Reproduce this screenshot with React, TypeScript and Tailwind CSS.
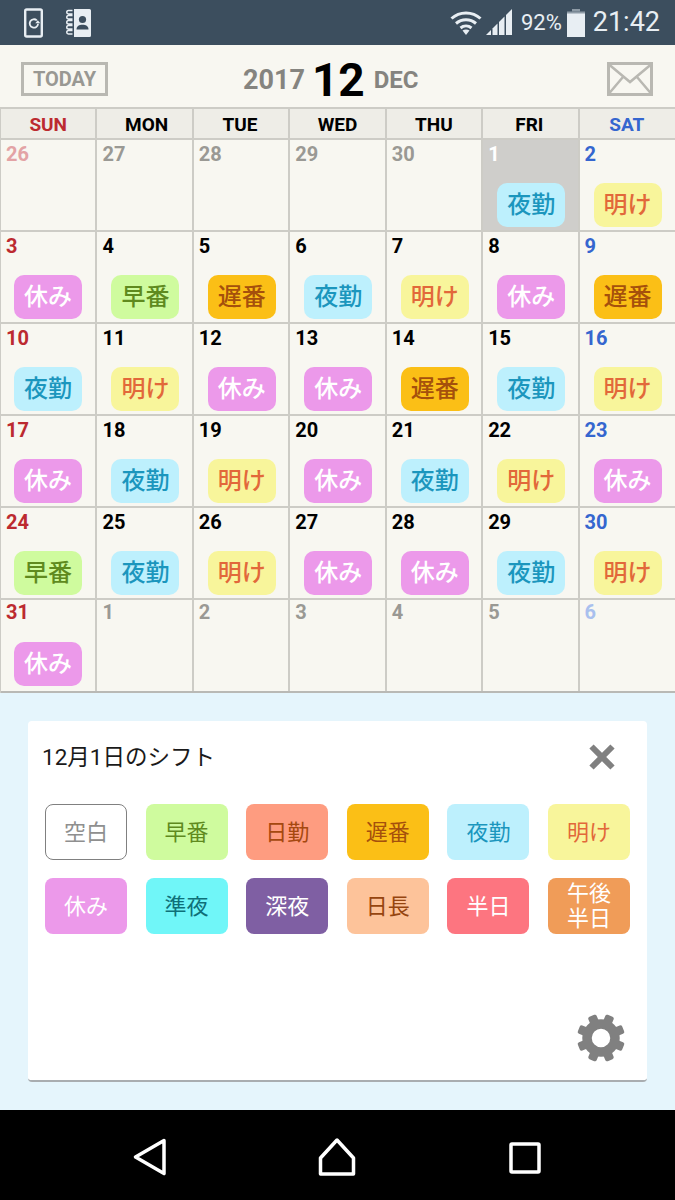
const font = { fontFamily: '"Roboto", "Noto Sans CJK JP", sans-serif' };

type Shift = { label: string; bg: string; fg: string };

const shifts: Record<string, Shift> = {
  yakin: { label: "夜勤", bg: "bg-[#bdf0fd]", fg: "text-[#1b96bd]" },
  ake: { label: "明け", bg: "bg-[#f8f59b]", fg: "text-[#e2683a]" },
  yasumi: { label: "休み", bg: "bg-[#ec99ea]", fg: "text-white" },
  haya: { label: "早番", bg: "bg-[#cffb9e]", fg: "text-[#5f8a1e]" },
  oso: { label: "遅番", bg: "bg-[#fbbf16]", fg: "text-[#a5500c]" },
};

const weekdays = [
  { name: "SUN", color: "text-[#bc2a30]" },
  { name: "MON", color: "text-black pl-[4px]" },
  { name: "TUE", color: "text-black pr-[2px]" },
  { name: "WED", color: "text-black" },
  { name: "THU", color: "text-black" },
  { name: "FRI", color: "text-black pr-[2px]" },
  { name: "SAT", color: "text-[#3566cf] pr-[2px]" },
];

// day, shift key, muted (outside the month)
const days: [number, string | null, boolean][] = [
  [26, null, true], [27, null, true], [28, null, true], [29, null, true], [30, null, true], [1, "yakin", false], [2, "ake", false],
  [3, "yasumi", false], [4, "haya", false], [5, "oso", false], [6, "yakin", false], [7, "ake", false], [8, "yasumi", false], [9, "oso", false],
  [10, "yakin", false], [11, "ake", false], [12, "yasumi", false], [13, "yasumi", false], [14, "oso", false], [15, "yakin", false], [16, "ake", false],
  [17, "yasumi", false], [18, "yakin", false], [19, "ake", false], [20, "yasumi", false], [21, "yakin", false], [22, "ake", false], [23, "yasumi", false],
  [24, "haya", false], [25, "yakin", false], [26, "ake", false], [27, "yasumi", false], [28, "yasumi", false], [29, "yakin", false], [30, "ake", false],
  [31, "yasumi", false], [1, null, true], [2, null, true], [3, null, true], [4, null, true], [5, null, true], [6, null, true],
];

const buttons = [
  { label: "空白", cls: "bg-white text-[#8f8f8f] border border-[#808080]" },
  { label: "早番", cls: "bg-[#cffb9e] text-[#5f8a1e]" },
  { label: "日勤", cls: "bg-[#fe9c80] text-[#a5480f]" },
  { label: "遅番", cls: "bg-[#fbbf16] text-[#a5500c]" },
  { label: "夜勤", cls: "bg-[#bdf0fd] text-[#1b96bd]" },
  { label: "明け", cls: "bg-[#f8f59b] text-[#e2683a]" },
  { label: "休み", cls: "bg-[#ec99ea] text-white" },
  { label: "準夜", cls: "bg-[#70f6f8] text-[#0f6f78]" },
  { label: "深夜", cls: "bg-[#7f5fa3] text-white" },
  { label: "日長", cls: "bg-[#fdc39a] text-[#96450f]" },
  { label: "半日", cls: "bg-[#fd7580] text-white" },
  { label: "午後\n半日", cls: "bg-[#f09c58] text-white" },
];

function dayColor(col: number, muted: boolean, selected: boolean) {
  if (selected) return "text-white";
  if (col === 0) return muted ? "text-[#e3a3a5]" : "text-[#bc2a30]";
  if (col === 6) return muted ? "text-[#a9c0ee]" : "text-[#3566cf]";
  return muted ? "text-[#9a9994]" : "text-black";
}

function StatusBar() {
  return (
    <div className="h-[45px] bg-[#3c4e5e] flex items-center pl-[24px] pr-[15px] shrink-0">
      <svg width="20" height="30" viewBox="0 0 20 30" fill="none">
        <rect x="1.200" y="1.500" width="16.600" height="27" rx="1.500" fill="#3c4e5e" stroke="#e8eef3" strokeWidth="2.400" />
        <path d="M12.800 12.400a4.200 4.200 0 1 0 1.300 3.400" stroke="#e8eef3" strokeWidth="1.800" />
        <path d="M11.300 15.300h5l-2.500-3z" fill="#e8eef3" />
      </svg>
      <svg className="ml-[22px]" width="26" height="30" viewBox="0 0 26 30" fill="none">
        <path d="M8 1h15.500a1.500 1.500 0 0 1 1.500 1.500v25a1.500 1.500 0 0 1-1.500 1.500H8z" fill="#e8eef3" />
        <circle cx="16.500" cy="11.500" r="3.600" fill="#3c4e5e" />
        <path d="M10.500 21.500c0-3.400 2.800-4.800 6-4.800s6 1.400 6 4.800z" fill="#3c4e5e" />
        <path
          d="M6.500 2.500H2.500a1.500 1.500 0 0 0 0 3.500h4M6.500 7.500H2.500a1.500 1.500 0 0 0 0 3.500h4M6.500 12.500H2.500a1.500 1.500 0 0 0 0 3.500h4M6.500 17.500H2.500a1.500 1.500 0 0 0 0 3.500h4M6.500 22.500H2.500a1.500 1.500 0 0 0 0 3.500h4"
          stroke="#e8eef3"
          strokeWidth="1.500"
        />
      </svg>
      <div className="ml-auto flex items-center">
        <svg width="32" height="26" viewBox="0 0 32 26" fill="none">
          <path d="M1.500 8.500C9.500 1 22.500 1 30.500 8.500" stroke="#e8eef3" strokeWidth="3" />
          <path d="M6 13.500c5.800-5 14.200-5 20 0" stroke="#e8eef3" strokeWidth="3" />
          <path d="M10.500 18c3.200-2.600 7.800-2.600 11 0" stroke="#e8eef3" strokeWidth="3" />
          <path d="M12.500 20.500 16 25l3.500-4.500c-2-1.300-5-1.300-7 0z" fill="#e8eef3" />
        </svg>
        <svg className="ml-[4px]" width="27" height="27" viewBox="0 0 27 27">
          <path d="M0 26 5 21v5z" fill="#e8eef3" />
          <path d="M6.500 19.500 11.500 14.500V26h-5z" fill="#e8eef3" />
          <path d="M13 13 18.500 7.500V26H13z" fill="#e8eef3" />
          <path d="M20 6 26 0v26h-6z" fill="#e8eef3" />
        </svg>
        <span className="ml-[8px] text-[22px] leading-none text-[#e8eef3]">92%</span>
        <svg className="ml-[5px]" width="18" height="28" viewBox="0 0 18 28">
          <path d="M5 0h8v2.500H5z" fill="#8e9ba6" />
          <path d="M0 2.500h18V5H0z" fill="#8e9ba6" />
          <rect x="0" y="4.500" width="18" height="23.500" fill="#e8eef3" />
        </svg>
        <span className="ml-[8px] text-[27px] leading-none text-[#e8eef3]">21:42</span>
      </div>
    </div>
  );
}

function Header() {
  return (
    <div className="h-[62px] bg-[#f8f7f1] flex items-center pl-[21px] pr-[22px] shrink-0">
      <div className="w-[87px] h-[34px] mt-[6px] border-[3px] border-[#b9b8b2] flex items-center justify-center text-[20px] font-bold text-[#999893] leading-none">
        TODAY
      </div>
      <div className="ml-[135px] flex items-center mt-[8px]">
        <span className="text-[27px] font-bold text-[#85847f] leading-none">2017</span>
        <span className="ml-[7px] text-[46px] font-bold text-black leading-none">12</span>
        <span className="ml-[9px] text-[24px] font-bold text-[#85847f] leading-none">DEC</span>
      </div>
      <svg className="ml-auto mt-[5px]" width="46" height="34" viewBox="0 0 46 34" fill="none">
        <rect x="1.500" y="1.500" width="43" height="31" stroke="#b9b8b2" strokeWidth="3" fill="none" />
        <path d="M2 2.500 23 20 44 2.500M2 31.500 16 15M44 31.500 30 15" stroke="#b9b8b2" strokeWidth="2.500" />
      </svg>
    </div>
  );
}

function Calendar() {
  return (
    <div className="w-[676px] shrink-0 bg-[#f8f7f1] border-l border-[#cdccc6]">
      <div className="grid grid-cols-7 h-[33px] border-t-2 border-b-2 border-[#cdccc6] bg-[#eeede7]">
        {weekdays.map((w, i) => (
          <div
            key={w.name}
            className={`flex items-center justify-center pt-[1px] text-[19px] font-bold leading-none ${w.color} ${i < 6 ? "border-r-2 border-[#cdccc6]" : ""}`}
          >
            {w.name}
          </div>
        ))}
      </div>
      <div className="grid grid-cols-7 grid-rows-[repeat(5,92px)_91px] border-b-2 border-[#b9b9b5]">
        {days.map(([day, key, muted], i) => {
          const col = i % 7;
          const selected = i === 5;
          const shift = key ? shifts[key] : null;
          return (
            <div
              key={i}
              className={`flex flex-col justify-between pl-[5px] border-[#cdccc6] ${i < 35 ? "border-b-2 pt-[2px] pb-[3px]" : "pb-[5px]"} ${col < 6 ? "border-r-2" : ""} ${selected ? "bg-[#cfcecb]" : ""}`}
            >
              <span className={`text-[20px] font-bold leading-[24px] ${dayColor(col, muted, selected)}`}>{day}</span>
              {shift && (
                <div
                  className={`w-[68px] h-[44px] ${col === 0 ? "ml-[8px]" : "ml-[9px]"} rounded-[10px] flex items-center justify-center text-[24px] font-medium leading-none ${shift.bg} ${shift.fg}`}
                >
                  {shift.label}
                </div>
              )}
            </div>
          );
        })}
      </div>
    </div>
  );
}

function Gear() {
  const teeth = [22.5, 67.5, 112.5, 157.5, 202.5, 247.5, 292.5, 337.5];
  return (
    <svg width="50" height="50" viewBox="0 0 50 50" fill="none">
      <circle cx="25" cy="25" r="14" stroke="#808080" strokeWidth="9.500" />
      {teeth.map((a) => (
        <rect key={a} x="20.500" y="1" width="9" height="10" rx="2" fill="#808080" transform={`rotate(${a} 25 25)`} />
      ))}
    </svg>
  );
}

function ShiftPanel() {
  return (
    <div className="flex-1 bg-[#e5f5fc] px-[28px] pt-[28px]">
      <div className="h-[361px] bg-white rounded-[4px] border-b-2 border-[#a9adb0] flex flex-col pl-[17px] pr-[17px]">
        <div className="flex items-center justify-between h-[72px] shrink-0">
          <span className="ml-[-3px] mt-[1px] text-[22.500px] leading-none text-[#1a1a1a]">12月1日のシフト</span>
          <svg className="mr-[14px]" width="28" height="28" viewBox="0 0 28 28" fill="none">
            <path d="M3.500 3.500 24.500 24.500M24.500 3.500 3.500 24.500" stroke="#808080" strokeWidth="6" />
          </svg>
        </div>
        <div className="grid grid-cols-6 gap-x-[18.600px] gap-y-[18px] mt-[11px]">
          {buttons.map((b) => (
            <div
              key={b.label}
              className={`h-[56px] rounded-[8px] flex items-center justify-center text-center whitespace-pre-line text-[22px] leading-[25px] ${b.cls}`}
            >
              {b.label}
            </div>
          ))}
        </div>
        <div className="mt-auto flex justify-end pb-[17px] pr-[4px]">
          <Gear />
        </div>
      </div>
    </div>
  );
}

function NavBar() {
  return (
    <div className="h-[90px] bg-black flex items-center shrink-0 pl-[133px] pt-[4px]">
      <svg width="34" height="38" viewBox="0 0 34 38" fill="none">
        <path d="M31 2.500 2.500 19 31 35.500z" stroke="white" strokeWidth="3.500" strokeLinejoin="round" />
      </svg>
      <svg className="ml-[151px]" width="38" height="38" viewBox="0 0 38 38" fill="none">
        <path d="M19 2 2.500 20v16h33V20z" stroke="white" strokeWidth="3.500" strokeLinejoin="round" />
      </svg>
      <svg className="ml-[153px] mt-[2px]" width="32" height="32" viewBox="0 0 32 32" fill="none">
        <rect x="2" y="2" width="28" height="28" rx="1" stroke="white" strokeWidth="3.500" />
      </svg>
    </div>
  );
}

export default function App() {
  return (
    <div className="w-[675px] h-[1200px] flex flex-col overflow-hidden" style={font}>
      <StatusBar />
      <Header />
      <Calendar />
      <ShiftPanel />
      <NavBar />
    </div>
  );
}
